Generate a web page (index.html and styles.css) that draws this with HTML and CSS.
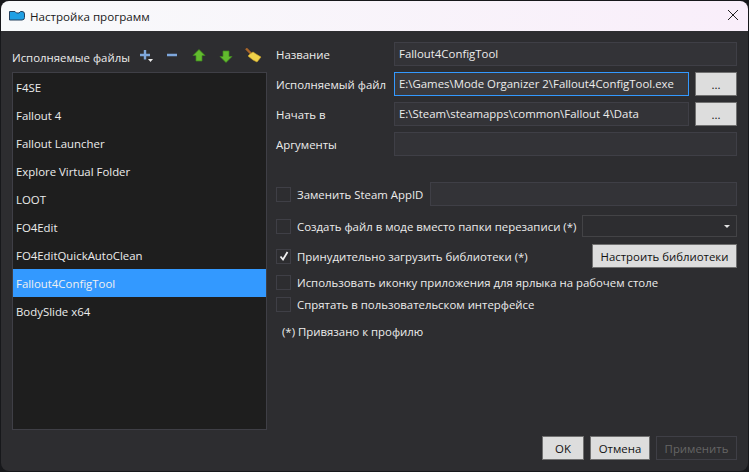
FILE: index.html
```html
<!DOCTYPE html>
<html lang="ru">
<head>
<meta charset="utf-8">
<title>Настройка программ</title>
<link rel="stylesheet" href="styles.css">
</head>
<body>
<div class="window">
  <header class="titlebar">
    <svg class="app-icon" width="16" height="10" viewBox="0 0 16 10"><path d="M.5.5h5.500l1.500 1.500h2.500L11.500.5h1.500a2.500 2.500 0 0 1 2.500 2.500v3.500a2.500 2.500 0 0 1-2.500 2.500H.5z" fill="#1fa0e4" stroke="#24425f" stroke-width="1"/></svg>
    <span class="title">Настройка программ</span>
    <svg class="close" width="10" height="10" viewBox="0 0 10 10"><path d="M0 0l10 10M10 0L0 10" stroke="#222" stroke-width="1"/></svg>
  </header>
  <main class="content">
    <div class="panes">
      <section class="left">
        <div class="toolbar">
          <span class="toolbar-label">Исполняемые файлы</span>
          <svg class="tool tool-add" width="16" height="16" viewBox="0 0 16 16"><path d="M6 1v9.500M1 6h10" stroke="#7ea7dc" stroke-width="2.400"/><path d="M9 10h5l-2.500 3z" fill="#ececec"/></svg>
          <svg class="tool tool-minus" width="14" height="16" viewBox="0 0 14 16"><path d="M2 6h10" stroke="#7ea7dc" stroke-width="2.400"/></svg>
          <svg class="tool tool-up" width="14" height="16" viewBox="0 0 14 16"><path d="M7 .5l6 6h-3v5.500H4V6.500H1z" fill="#62bb2e" stroke="#3f8a1e" stroke-width=".7"/></svg>
          <svg class="tool tool-down" width="14" height="16" viewBox="0 0 14 16"><path d="M7 13.500l6-6h-3V2H4v5.500H1z" fill="#62bb2e" stroke="#3f8a1e" stroke-width=".7"/></svg>
          <svg class="tool tool-broom" width="18" height="18" viewBox="0 0 18 18"><path d="M1 .5l5 5" stroke="#a8662a" stroke-width="2.400"/><path d="M5 6l3-2 3 2 5 3-4 5-4-2-5-4z" fill="#f0d24a" stroke="#c9a22c" stroke-width=".6"/></svg>
        </div>
        <ul class="list">
          <li>F4SE</li>
          <li>Fallout 4</li>
          <li>Fallout Launcher</li>
          <li>Explore Virtual Folder</li>
          <li>LOOT</li>
          <li>FO4Edit</li>
          <li>FO4EditQuickAutoClean</li>
          <li class="selected">Fallout4ConfigTool</li>
          <li>BodySlide x64</li>
        </ul>
      </section>
      <section class="right">
        <div class="form">
          <label class="field-label">Название</label>
          <div class="input wide">Fallout4ConfigTool</div>
          <label class="field-label">Исполняемый файл</label>
          <div class="input focused">E:\Games\Mode Organizer 2\Fallout4ConfigTool.exe</div>
          <button class="btn browse">...</button>
          <label class="field-label">Начать в</label>
          <div class="input">E:\Steam\steamapps\common\Fallout 4\Data</div>
          <button class="btn browse">...</button>
          <label class="field-label">Аргументы</label>
          <div class="input wide"></div>
        </div>
        <div class="options">
          <div class="opt opt-appid">
            <span class="check"></span><span class="opt-text">Заменить Steam AppID</span>
            <div class="input grow"></div>
          </div>
          <div class="opt opt-mod">
            <span class="check"></span><span class="opt-text">Создать файл в моде вместо папки перезаписи (*)</span>
            <div class="combo"><span class="arrow"></span></div>
          </div>
          <div class="opt opt-force">
            <span class="check"><svg width="10" height="10" viewBox="0 0 10 10"><path d="M1.500 5.500l2.500 3L8.500 1" fill="none" stroke="#f0f0f0" stroke-width="1.800"/></svg></span><span class="opt-text">Принудительно загрузить библиотеки (*)</span>
            <button class="btn libs">Настроить библиотеки</button>
          </div>
          <div class="opt opt-icon">
            <span class="check"></span><span class="opt-text">Использовать иконку приложения для ярлыка на рабочем столе</span>
          </div>
          <div class="opt opt-hide">
            <span class="check"></span><span class="opt-text">Спрятать в пользовательском интерфейсе</span>
          </div>
          <p class="note">(*) Привязано к профилю</p>
        </div>
      </section>
    </div>
    <footer class="actions">
      <button class="btn ok">OK</button>
      <button class="btn cancel">Отмена</button>
      <button class="btn apply" disabled>Применить</button>
    </footer>
  </main>
</div>
</body>
</html>
```
FILE: styles.css
```css
* { box-sizing: border-box; }
html, body { margin: 0; height: 100%; }
body {
  background: #17181b;
  font-family: "Open Sans", "Noto Sans", sans-serif;
  font-size: 11.4px;
  color: #ececec;
  overflow: hidden;
  padding: 1px 0 0 1px;
}
.window {
  width: 747px;
  height: 470px;
  border-radius: 8px;
  overflow: hidden;
  background: #2d2d30;
  display: flex;
  flex-direction: column;
}
.titlebar {
  height: 30px;
  flex: none;
  background: linear-gradient(90deg, #f8fafb, #f9eefa);
  color: #1a1a1a;
  display: flex;
  align-items: center;
  padding: 0 10px 0 8px;
}
.app-icon { margin-right: 5px; }
.title { flex: 1; font-size: 11.6px; }
.close { margin-top: -2px; }
.content {
  flex: 1;
  display: flex;
  flex-direction: column;
  padding: 0 11px 11px 11px;
}
.panes { flex: 1; display: flex; min-height: 0; }
.left { width: 255px; flex: none; display: flex; flex-direction: column; }
.toolbar { height: 41px; flex: none; display: flex; align-items: center; padding-top: 11px; }
.toolbar-label { width: 127px; flex: none; }
.tool { flex: none; }
.tool-add { margin-right: 10px; }
.tool-minus { margin-right: 13px; }
.tool-up { margin-right: 13px; }
.tool-down { margin-right: 12px; }
.list {
  list-style: none;
  margin: 0;
  padding: 0;
  height: 358px;
  background: #1e1e1e;
  border: 1px solid #3f3f46;
}
.list li { height: 28px; line-height: 30px; padding-left: 3px; white-space: nowrap; }
.list li.selected { background: #3399ff; color: #f0f0f0; }
.right { flex: 1; min-width: 0; padding: 11px 0 0 9px; }
.form {
  display: grid;
  grid-template-columns: 118px minmax(0, 1fr) 42px;
  row-gap: 6px;
  align-items: center;
}
.field-label { white-space: nowrap; }
.input {
  height: 24px;
  line-height: 22px;
  background: #333337;
  border: 1px solid #3f3f46;
  padding-left: 4px;
  white-space: nowrap;
}
.form .input:not(.wide) { margin-right: 6px; }
.input.wide { grid-column: 2 / 4; }
.input.focused { border-color: #3399ff; background: #3a3a3e; }
.btn {
  font: inherit;
  height: 24px;
  padding: 0;
  background: #dddddd;
  border: 1px solid #707070;
  color: #111;
}
.browse { width: 42px; }
.options { margin-top: 26px; display: flex; flex-direction: column; }
.opt { display: flex; align-items: center; white-space: nowrap; }
.check {
  width: 15px;
  height: 15px;
  flex: none;
  border: 1px solid #3f3f46;
  margin-right: 6px;
  display: flex;
  align-items: center;
  justify-content: center;
}
.opt-appid { height: 24px; margin-bottom: 9px; }
.opt-appid .input { margin-left: 7px; }
.grow { flex: 1; }
.opt-mod { height: 22px; margin-bottom: 7px; }
.combo {
  margin-left: 6px;
  flex: 1;
  height: 22px;
  background: #2d2d30;
  border: 1px solid #434346;
  position: relative;
}
.arrow {
  position: absolute;
  right: 6px;
  top: 9px;
  border: 3px solid transparent;
  border-top: 3px solid #e4e4e4;
  border-bottom: 0;
}
.opt-force { height: 24px; margin-bottom: 6px; }
.libs { margin-left: auto; width: 145px; }
.opt-icon { height: 16px; margin-bottom: 6px; }
.opt-hide { height: 16px; }
.note { margin: 12px 0 0 6px; }
.actions { display: flex; justify-content: flex-end; gap: 6px; flex: none; }
.ok { width: 42px; }
.cancel { width: 60px; }
.apply { width: 81px; background: #2d2d30; border-color: #3f3f46; color: #656565; }
```
